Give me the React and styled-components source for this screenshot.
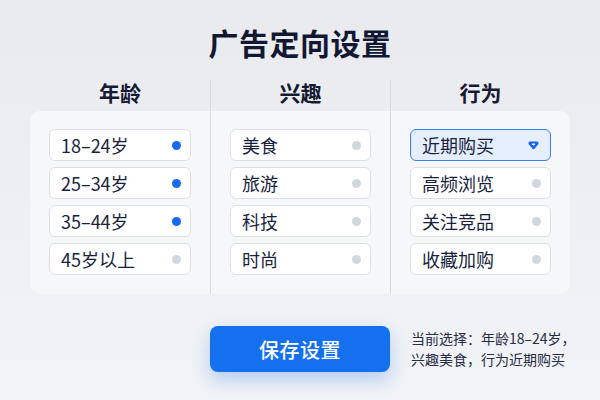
import styled, { createGlobalStyle } from "styled-components";

const GlobalStyle = createGlobalStyle`
  html, body {
    margin: 0;
    padding: 0;
  }
  body {
    width: 600px;
    height: 400px;
    overflow: hidden;
    background: linear-gradient(180deg, #e8eaee 0%, #eef0f3 60%, #f1f3f6 100%);
    font-family: "Noto Sans CJK SC", "Noto Sans", sans-serif;
  }
`;

const Page = styled.div`
  height: 400px;
  padding-top: 24px;
  box-sizing: border-box;
`;

const Title = styled.h1`
  margin: 0;
  text-align: center;
  font-size: 30px;
  line-height: 36px;
  font-weight: 700;
  color: #131832;
  letter-spacing: 0.5px;
`;

const Board = styled.div`
  display: grid;
  grid-template-columns: repeat(3, 180px);
  width: 540px;
  margin: 20px auto 0;
`;

const Column = styled.div`
  display: flex;
  flex-direction: column;
  border-left: ${(p) => (p.$first ? "none" : "1px solid #d6dae1")};
`;

const Header = styled.div`
  height: 31px;
  line-height: 24px;
  text-align: center;
  font-size: 21px;
  font-weight: 700;
  color: #161b33;
`;

const List = styled.div`
  display: flex;
  flex-direction: column;
  gap: 6px;
  padding: 18px 19px 19px;
  background: #f6f7f9;
  border-radius: ${(p) => p.$radius};
`;

const Item = styled.div`
  display: flex;
  align-items: center;
  justify-content: space-between;
  height: 32px;
  box-sizing: border-box;
  padding: 0 9px 0 11px;
  border-radius: 6px;
  background: ${(p) => (p.$active ? "#e5eefc" : "#ffffff")};
  border: ${(p) => (p.$active ? "1.5px solid #3b7ff1" : "1px solid #dcdfe6")};
  font-size: 18px;
  color: #191f3d;
`;

const Dot = styled.span`
  width: 9px;
  height: 9px;
  border-radius: 50%;
  background: ${(p) => (p.$on ? "#1769f3" : "#d2d6dd")};
`;

const Mark = () => (
  <svg width="11" height="9" viewBox="0 0 11 9" style={{ marginRight: 2 }}>
    <path
      d="M2.2 0.5 H8.8 Q10.8 0.5 10.5 2.5 Q10.3 3.6 9.2 4.6 L6.7 7.6 Q5.5 8.8 4.3 7.6 L1.8 4.6 Q0.7 3.6 0.5 2.5 Q0.2 0.5 2.2 0.5 Z"
      fill="#1565ef"
    />
    <ellipse cx="5.5" cy="3.3" rx="1.7" ry="1.1" fill="#e5eefc" />
  </svg>
);

const Footer = styled.div`
  display: grid;
  grid-template-columns: repeat(3, 180px);
  width: 540px;
  margin: 32px auto 0;
  align-items: center;
`;

const SaveButton = styled.button`
  grid-column: 2;
  height: 46px;
  border: none;
  border-radius: 8px;
  background: #1570ef;
  color: #ffffff;
  font-family: "Noto Sans CJK SC", "Noto Sans", sans-serif;
  font-size: 20px;
  font-weight: 500;
  letter-spacing: 0.5px;
  box-shadow: 0 8px 18px rgba(21, 112, 239, 0.28);
  cursor: pointer;
`;

const Summary = styled.div`
  padding-left: 21px;
  font-size: 14px;
  line-height: 21px;
  color: #272d45;
  white-space: nowrap;
`;

const columns = [
  {
    title: "年龄",
    radius: "10px 0 0 10px",
    items: [
      { label: "18–24岁", on: true },
      { label: "25–34岁", on: true },
      { label: "35–44岁", on: true },
      { label: "45岁以上", on: false },
    ],
  },
  {
    title: "兴趣",
    radius: "0",
    items: [
      { label: "美食" },
      { label: "旅游" },
      { label: "科技" },
      { label: "时尚" },
    ],
  },
  {
    title: "行为",
    radius: "0 10px 10px 0",
    items: [
      { label: "近期购买", active: true },
      { label: "高频浏览" },
      { label: "关注竞品" },
      { label: "收藏加购" },
    ],
  },
];

const App = () => {
  return (
    <Page>
      <GlobalStyle />
      <Title>广告定向设置</Title>
      <Board>
        {columns.map((col, i) => (
          <Column key={col.title} $first={i === 0}>
            <Header>{col.title}</Header>
            <List $radius={col.radius}>
              {col.items.map((item) => (
                <Item key={item.label} $active={item.active}>
                  {item.label}
                  {item.active ? <Mark /> : <Dot $on={item.on} />}
                </Item>
              ))}
            </List>
          </Column>
        ))}
      </Board>
      <Footer>
        <SaveButton>保存设置</SaveButton>
        <Summary>
          当前选择：年龄18–24岁，
          <br />
          兴趣美食，行为近期购买
        </Summary>
      </Footer>
    </Page>
  );
};

export default App;
